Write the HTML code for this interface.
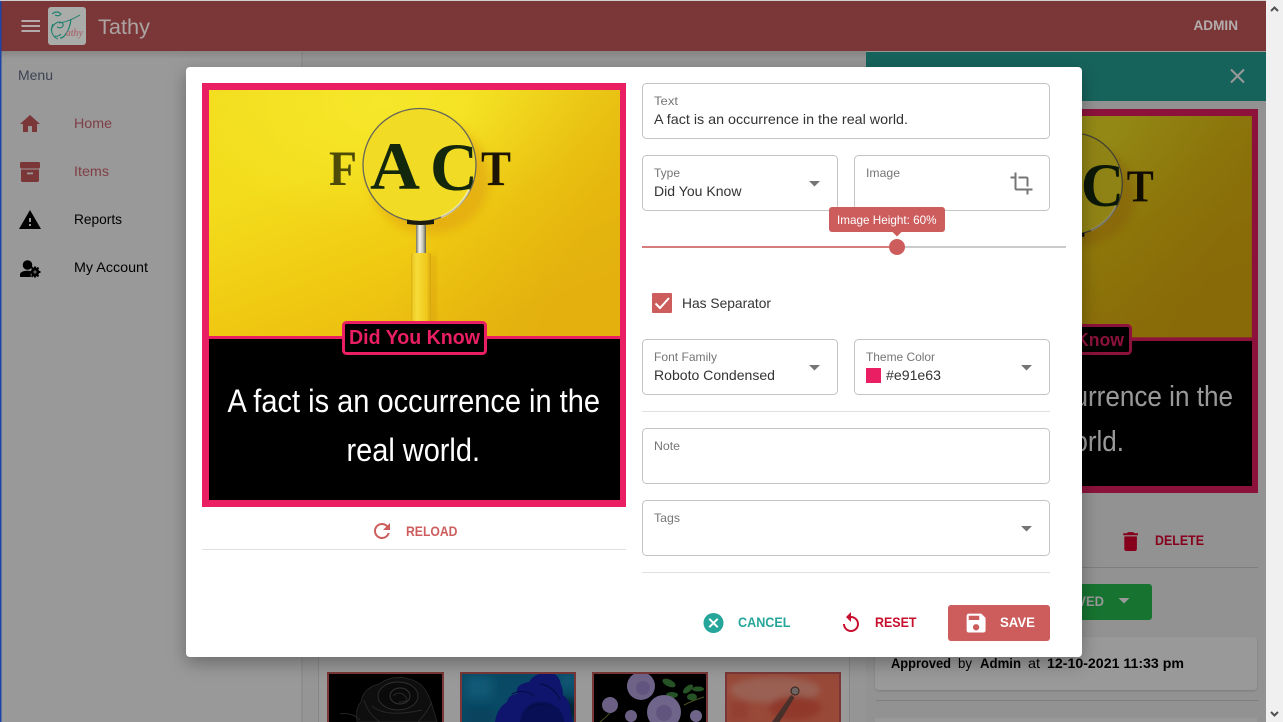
<!DOCTYPE html>
<html lang="en">
<head>
<meta charset="utf-8">
<title>Tathy</title>
<style>
html,body{margin:0;padding:0;width:1283px;height:722px;overflow:hidden;background:#fff}
svg{display:block}
text{font-family:"Liberation Sans",Arial,sans-serif;font-size:14px}
.m{font-weight:600}
.b{font-weight:700}
.lab{font-size:12px;fill:#757575}
.val{font-size:14px;fill:#333}
.f{fill:#fff;stroke:#c4c4c4;stroke-width:1}
.serif{font-family:"Liberation Serif",serif;font-weight:700}
</style>
</head>
<body>
<svg xmlns="http://www.w3.org/2000/svg" width="1283" height="722" viewBox="0 0 1283 722">
<defs>
  <linearGradient id="yel" x1="0" y1="0" x2="0.6" y2="1">
    <stop offset="0" stop-color="#f2dd1e"/>
    <stop offset=".35" stop-color="#f3dc1c"/>
    <stop offset=".7" stop-color="#f0ca12"/>
    <stop offset="1" stop-color="#eabb10"/>
  </linearGradient>
  <radialGradient id="glow" cx=".42" cy=".05" r=".5">
    <stop offset="0" stop-color="#f7ea2e" stop-opacity=".8"/>
    <stop offset="1" stop-color="#f7ea2e" stop-opacity="0"/>
  </radialGradient>
  <linearGradient id="rdark" x1="0" y1="0" x2="1" y2=".25">
    <stop offset=".6" stop-color="#dca60c" stop-opacity="0"/>
    <stop offset="1" stop-color="#dca60c" stop-opacity=".5"/>
  </linearGradient>
  <linearGradient id="metal" x1="0" y1="0" x2="1" y2="0">
    <stop offset="0" stop-color="#77745e"/><stop offset=".35" stop-color="#f6f6ee"/><stop offset=".7" stop-color="#c4c4b4"/><stop offset="1" stop-color="#5f5c48"/>
  </linearGradient>
  <linearGradient id="hand" x1="0" y1="0" x2="1" y2="0">
    <stop offset="0" stop-color="#d9ad12"/><stop offset=".12" stop-color="#f0cf28"/><stop offset=".3" stop-color="#f6dc3a"/><stop offset=".8" stop-color="#efc81a"/><stop offset="1" stop-color="#d6a40e"/>
  </linearGradient>
  <clipPath id="lensclip"><circle cx="419.500" cy="165" r="56"/></clipPath>
  <clipPath id="imgclip"><rect x="209" y="90" width="411" height="246"/></clipPath>
  <clipPath id="th"><rect x="327" y="672" width="117" height="50"/><rect x="460" y="672" width="116" height="50"/><rect x="592" y="672" width="116" height="50"/><rect x="725" y="672" width="116" height="50"/></clipPath>
  <filter id="ms" x="-10%" y="-10%" width="120%" height="120%"><feDropShadow dx="0" dy="6" stdDeviation="9" flood-color="#000" flood-opacity=".3"/></filter>
  <filter id="cs" x="-5%" y="-20%" width="110%" height="140%"><feDropShadow dx="0" dy="1" stdDeviation="1" flood-color="#000" flood-opacity=".16"/></filter>
  <filter id="bl" x="-30%" y="-30%" width="160%" height="160%"><feGaussianBlur stdDeviation="5"/></filter>
  <filter id="bm" x="-30%" y="-30%" width="160%" height="160%"><feGaussianBlur stdDeviation="3"/></filter>
  <linearGradient id="barsh" x1="0" y1="0" x2="0" y2="1"><stop offset="0" stop-color="#000" stop-opacity=".12"/><stop offset="1" stop-color="#000" stop-opacity="0"/></linearGradient>
</defs>

<!-- page base -->
<rect width="1283" height="722" fill="#fff"/>

<!-- sidebar -->
<rect x="301.500" y="52" width="1" height="670" fill="#dcdcdc"/>
<text x="18" y="80" textLength="35" lengthAdjust="spacingAndGlyphs" fill="#667088">Menu</text>
<path transform="translate(18,112)" d="M10 20v-6h4v6h5v-8h3L12 3 2 12h3v8z" fill="#cd5c5c"/>
<text x="74" y="128" textLength="38" lengthAdjust="spacingAndGlyphs" fill="#d56a72">Home</text>
<g fill="#cd5c5c">
  <rect x="20" y="162" width="20" height="6.5" rx="1.5"/>
  <path d="M21 169.500h18v11a1.500 1.500 0 0 1-1.500 1.500h-15a1.500 1.500 0 0 1-1.500-1.500z"/>
</g>
<rect x="27" y="172.500" width="6" height="1.800" fill="#fff"/>
<text x="74" y="176" textLength="35" lengthAdjust="spacingAndGlyphs" fill="#d56a72">Items</text>
<path transform="translate(18,208)" fill-rule="evenodd" d="M1 21h22L12 2 1 21zm12-3h-2v-2h2v2zm0-4h-2v-4h2v4z" fill="#000"/>
<text x="74" y="224" textLength="48" lengthAdjust="spacingAndGlyphs" fill="#000">Reports</text>
<g fill="#000">
  <circle cx="27.500" cy="265" r="4.800"/>
  <path d="M20 277v-2.500c0-2.500 3.500-3.800 7.500-3.800 1.200 0 2.300.1 3.300.4v5.900z"/>
  <circle cx="35" cy="272" r="4.300"/>
  <path d="M34 266.500h2l.4 1.800h-2.800zM34 277.500h2l.4-1.800h-2.800zM29.500 271h1.800v2h-1.800zM38.700 271h1.800v2h-1.800zM30.800 268l1.400-1.400 1.300 1.300-1.400 1.400zM36.500 275.800l1.400-1.400 1.300 1.300-1.400 1.400zM30.800 276l1.400 1.400 1.300-1.300-1.400-1.400zM36.500 268.200l1.400 1.400 1.300-1.300-1.400-1.400z"/>
</g>
<circle cx="35" cy="272" r="1.600" fill="#999"/>
<text x="74" y="272" textLength="74" lengthAdjust="spacingAndGlyphs" fill="#000">My Account</text>

<!-- main list area -->
<rect x="303" y="52" width="563" height="670" fill="#f8f8f8"/>
<rect x="318.500" y="80" width="531" height="642" fill="#fff"/>
<rect x="318" y="80" width="1" height="642" fill="#e0e0e0"/>
<rect x="849" y="80" width="1" height="642" fill="#e0e0e0"/>
<g>
  <rect x="327" y="672" width="117" height="50" fill="#000"/>
  <rect x="460" y="672" width="116" height="50" fill="#0f7ba8"/>
  <rect x="592" y="672" width="116" height="50" fill="#000"/>
  <rect x="725" y="672" width="116" height="50" fill="#ff7a5e"/>
  <g clip-path="url(#th)">
    <!-- black rose -->
    <path d="M357 722q-2-14 4-20 2-14 18-18 14-10 30-5 14 3 20 18 4 10 8 25z" fill="#181818" stroke="#444" stroke-width=".8"/>
    <ellipse cx="398" cy="696" rx="20" ry="14" fill="#111" stroke="#505050" stroke-width=".9"/>
    <ellipse cx="400" cy="696" rx="10" ry="8" fill="none" stroke="#5a5a5a" stroke-width=".9"/>
    <path d="M393 696q6-6 12 0t-6 6M372 706q14 12 50 4M364 700q4 14 16 22M432 702q-6 12-14 20M340 714q12-2 20 6" stroke="#444" stroke-width=".9" fill="none"/>
    <!-- blue rose -->
    <g filter="url(#bl)"><rect x="466" y="676" width="26" height="22" fill="#1f96c8"/><rect x="560" y="672" width="16" height="16" fill="#1e92c4"/><rect x="562" y="700" width="14" height="22" fill="#06263f"/><rect x="466" y="710" width="30" height="12" fill="#0d6c98"/></g>
    <path d="M495 722q2-14 12-20 2-8 10-8-2-10 12-12 6-10 22-9 8 1 10 12 2 4 2 10 8 6 8 20l2 7z" fill="#1a24b4"/>
    <path d="M520 722q2-16 16-20 14-2 24 8 4 6 4 12z" fill="#101a8c"/>
    <path d="M512 694q12-6 22 2M540 684q14 2 20 16M528 710q10-10 22-2" stroke="#0c1478" fill="none" stroke-width="1.200"/>
    <!-- purple roses -->
    <g fill="#3f8a3e">
      <ellipse cx="669" cy="683" rx="7" ry="3.500" transform="rotate(25 669 683)"/><ellipse cx="688" cy="689" rx="6" ry="3" transform="rotate(-40 688 689)"/><ellipse cx="698" cy="689" rx="6" ry="2.500"/><ellipse cx="692" cy="697" rx="5" ry="3.500"/><ellipse cx="672" cy="695" rx="6" ry="3"/>
    </g>
    <path d="M684 705q10-5 20-8M600 722q10-8 16-16" stroke="#7a8a3a" fill="none"/>
    <circle cx="641" cy="686" r="14" fill="#b7a5e2"/><circle cx="643" cy="688" r="7" fill="#a28ed4"/>
    <circle cx="610" cy="705" r="8" fill="#b2a0dc"/>
    <circle cx="664" cy="712" r="17" fill="#baa8e6"/><circle cx="664" cy="713" r="8" fill="#a28ed4"/>
    <circle cx="631" cy="719" r="3" fill="#b2a0dc"/><circle cx="631" cy="716" r="6" fill="#b2a0dc"/><circle cx="696" cy="716" r="6" fill="#baa8e6"/>
    <!-- coral rose -->
    <g filter="url(#bm)">
      <ellipse cx="775" cy="690" rx="45" ry="13" fill="#ffa08a"/>
      <ellipse cx="795" cy="708" rx="26" ry="12" fill="#f06048"/>
      <rect x="730" y="702" width="18" height="18" fill="#f46a54"/>
    </g>
    <path d="M772 722l19-27 3.500 2.500-15 24.500z" fill="#7a5048"/>
    <circle cx="795" cy="691" r="4" fill="#b8a8a4" stroke="#54342e"/>
  </g>
  <g fill="none" stroke="#cd5c5c" stroke-width="2">
    <path d="M328 722v-49h115v49"/>
    <path d="M461 722v-49h114v49"/>
    <path d="M593 722v-49h114v49"/>
    <path d="M726 722v-49h114v49"/>
  </g>
</g>

<!-- right detail panel -->
<rect x="866" y="52" width="400" height="670" fill="#f4f4f4"/>
<rect x="866" y="52" width="400" height="49" fill="#26a69a"/>
<path d="M1231 69.500l13 13M1244 69.500l-13 13" stroke="#fff" stroke-width="2"/>
<rect x="876" y="109" width="382" height="384" fill="#e91e63"/>
<rect x="882" y="341" width="370" height="145" fill="#000"/>

<g transform="translate(693.900,35) scale(.9)">
  <g clip-path="url(#imgclip)">
    <rect x="209" y="90" width="411" height="246" fill="url(#yel)"/>
    <rect x="209" y="90" width="411" height="246" fill="url(#glow)"/>
    <rect x="209" y="90" width="411" height="246" fill="url(#rdark)"/>
    <ellipse cx="430" cy="178" rx="60" ry="56" fill="#d88c08" opacity=".4" filter="url(#bl)"/>
    <text class="serif" x="329" y="185" style="font-size:50px" textLength="28" lengthAdjust="spacingAndGlyphs" fill="#4e4a08">F</text>
    <text class="serif" x="481" y="185" style="font-size:50px" textLength="30" lengthAdjust="spacingAndGlyphs" fill="#1c1404">T</text>
    <circle cx="419.500" cy="165" r="56.500" fill="#f1db24" stroke="#66665a" stroke-width="1.300"/>
    <g clip-path="url(#lensclip)">
      <text class="serif" x="370" y="189" style="font-size:68px" textLength="50" lengthAdjust="spacingAndGlyphs" fill="#13270c">A</text>
      <text class="serif" x="430" y="190" style="font-size:68px" textLength="48" lengthAdjust="spacingAndGlyphs" fill="#13270c">C</text>
    </g>
    <path d="M469 190a55 55 0 0 1-28 27" fill="none" stroke="#fff" stroke-width="2.500" opacity=".55"/>
    <path d="M407 219.500q13 3 27 0v4.500q-13 2-27 0z" fill="#1b1b10"/>
    <rect x="416" y="225" width="10" height="28" fill="url(#metal)"/>
    <rect x="411" y="253" width="20" height="83" rx="2" fill="url(#hand)"/>
  </g>
</g>
<rect x="1002.500" y="325.500" width="128" height="28" rx="3" fill="#000" stroke="#e91e63" stroke-width="3"/>
<text class="b" x="1006" y="346" style="font-size:18px" textLength="118" lengthAdjust="spacingAndGlyphs" fill="#e91e63">Did You Know</text>
<text x="898" y="406" style="font-size:29px" textLength="335" lengthAdjust="spacingAndGlyphs" fill="#fff">A fact is an occurrence in the</text>
<text x="1004" y="451" style="font-size:29px" textLength="120" lengthAdjust="spacingAndGlyphs" fill="#fff">real world.</text>

<path transform="translate(1118,529) scale(1.050)" d="M6 19c0 1.100.9 2 2 2h8c1.100 0 2-.9 2-2V7H6v12zM19 4h-3.500l-1-1h-5l-1 1H5v2h14V4z" fill="#e00030"/>
<text class="m" x="1155" y="545" textLength="49" lengthAdjust="spacingAndGlyphs" fill="#e00030">DELETE</text>
<rect x="876" y="567" width="382" height="1" fill="#d2d2d2"/>
<rect x="1000" y="584" width="152" height="36" rx="3" fill="#26c050"/>
<text class="m" x="1058" y="606" textLength="46" lengthAdjust="spacingAndGlyphs" fill="#fff">ROVED</text>
<path d="M1118.500 598h11l-5.500 5.500z" fill="#fff"/>
<rect x="875" y="637" width="382" height="53" rx="4" fill="#fff" filter="url(#cs)"/>
<text class="b" x="891" y="668" textLength="60" lengthAdjust="spacingAndGlyphs" fill="#000">Approved</text>
<text x="958" y="668" textLength="14" lengthAdjust="spacingAndGlyphs" fill="#000">by</text>
<text class="b" x="980" y="668" textLength="41" lengthAdjust="spacingAndGlyphs" fill="#000">Admin</text>
<text x="1028" y="668" textLength="12" lengthAdjust="spacingAndGlyphs" fill="#000">at</text>
<text class="b" x="1047" y="668" textLength="137" lengthAdjust="spacingAndGlyphs" fill="#000">12-10-2021 11:33 pm</text>
<rect x="876" y="700" width="382" height="1" fill="#d2d2d2"/>
<rect x="875" y="718" width="382" height="4" fill="#fff"/>

<!-- app bar -->
<rect x="0" y="51" width="866" height="8" fill="url(#barsh)"/>
<rect x="0" y="1" width="1283" height="50" fill="#cd5c5c"/>

<!-- scrim -->
<rect x="0" y="0" width="1266" height="722" fill="#000" opacity=".4"/>

<!-- window chrome -->
<rect x="0" y="0" width="1.500" height="722" fill="#1c43a6"/>
<rect x="0" y="0" width="1266" height="1" fill="#cfcfcf"/>
<rect x="1266" y="0" width="17" height="722" fill="#f0f0f0"/>
<path d="M1271 11l3.500-3.500 3.500 3.500" fill="none" stroke="#505050" stroke-width="2"/>
<path d="M1271 712l3.500 3.500 3.500-3.500" fill="none" stroke="#505050" stroke-width="2"/>

<!-- app bar content -->
<g fill="#b5abab">
  <rect x="21.500" y="20" width="18.500" height="2"/>
  <rect x="21.500" y="25" width="18.500" height="2"/>
  <rect x="21.500" y="30" width="18.500" height="2"/>
</g>
<rect x="48" y="7" width="38" height="38" rx="3" fill="#a9aca8"/>
<g fill="none" stroke="#1f7f6e">
  <path d="M52 14q5-4 9 0-2 3-6 1M53 24q-3 6 0 11 2 3 5 4M51 30q3-8 9-8 4 1 3 4-2 3-6 1M55 36q3 1 6-2" stroke-width="1.100"/>
  <path d="M59 23q9-1 21-8" stroke-width="1"/>
  <path d="M71 19q-1 10-6 16-2 3-5 3" stroke-width="1.200"/>
</g>
<text x="66" y="36" style="font-size:11px;font-family:'Liberation Serif',serif;font-style:italic;font-weight:700" textLength="17" lengthAdjust="spacingAndGlyphs" fill="#a87078">athy</text>
<text x="98" y="34" style="font-size:21px" textLength="52" lengthAdjust="spacingAndGlyphs" fill="#aca4a4">Tathy</text>
<text class="m" x="1193.500" y="30" textLength="44.500" lengthAdjust="spacingAndGlyphs" fill="#b5adad">ADMIN</text>

<!-- modal -->
<rect x="186" y="67" width="896" height="590" rx="4" fill="#fff" filter="url(#ms)"/>

<!-- preview card -->
<rect x="202" y="83" width="424" height="424" fill="#e91e63"/>
<rect x="209" y="339" width="411" height="161" fill="#000"/>
<g clip-path="url(#imgclip)">
  <rect x="209" y="90" width="411" height="246" fill="url(#yel)"/>
  <rect x="209" y="90" width="411" height="246" fill="url(#glow)"/>
  <rect x="209" y="90" width="411" height="246" fill="url(#rdark)"/>
  <ellipse cx="430" cy="178" rx="60" ry="56" fill="#d88c08" opacity=".4" filter="url(#bl)"/>
  <rect x="430" y="255" width="6" height="80" fill="#cc8a08" opacity=".35" filter="url(#bm)"/>
  <text class="serif" x="329" y="185" style="font-size:50px" textLength="28" lengthAdjust="spacingAndGlyphs" fill="#4e4a08">F</text>
  <text class="serif" x="481" y="185" style="font-size:50px" textLength="30" lengthAdjust="spacingAndGlyphs" fill="#1c1404">T</text>
  <circle cx="419.500" cy="165" r="56.500" fill="#f1db24" stroke="#66665a" stroke-width="1.300"/>
  <g clip-path="url(#lensclip)">
    <text class="serif" x="370" y="189" style="font-size:68px" textLength="50" lengthAdjust="spacingAndGlyphs" fill="#13270c">A</text>
    <text class="serif" x="430" y="190" style="font-size:68px" textLength="48" lengthAdjust="spacingAndGlyphs" fill="#13270c">C</text>
  </g>
  <path d="M469 190a55 55 0 0 1-28 27" fill="none" stroke="#fff" stroke-width="2.500" opacity=".55"/>
  <path d="M407 219.500q13 3 27 0v4.500q-13 2-27 0z" fill="#1b1b10"/>
  <rect x="416" y="225" width="10" height="28" fill="url(#metal)"/>
  <rect x="411" y="253" width="20" height="83" rx="2" fill="url(#hand)"/>
</g>
<rect x="343.500" y="322.500" width="142" height="31" rx="3" fill="#000" stroke="#e91e63" stroke-width="3"/>
<text class="b" x="349" y="344" style="font-size:20px" textLength="131" lengthAdjust="spacingAndGlyphs" fill="#e91e63">Did You Know</text>
<text x="227.500" y="412" style="font-size:32px" textLength="372.500" lengthAdjust="spacingAndGlyphs" fill="#fff">A fact is an occurrence in the</text>
<text x="346.500" y="461" style="font-size:32px" textLength="133.500" lengthAdjust="spacingAndGlyphs" fill="#fff">real world.</text>

<path transform="translate(370,519)" d="M17.650 6.350C16.200 4.900 14.210 4 12 4c-4.420 0-7.990 3.580-7.990 8s3.570 8 7.990 8c3.730 0 6.840-2.550 7.730-6h-2.080c-.82 2.330-3.040 4-5.650 4-3.310 0-6-2.690-6-6s2.690-6 6-6c1.660 0 3.140.69 4.220 1.780L13 11h7V4l-2.350 2.350z" fill="#cd5c5c"/>
<text class="m" x="406" y="536" textLength="51.500" lengthAdjust="spacingAndGlyphs" fill="#cd5c5c">RELOAD</text>
<rect x="202" y="549" width="424" height="1" fill="#e0e0e0"/>

<!-- form -->
<rect class="f" x="642.500" y="83.500" width="407" height="55" rx="4"/>
<text class="lab" x="654" y="105" textLength="24" lengthAdjust="spacingAndGlyphs">Text</text>
<text class="val" x="654" y="124" textLength="254" lengthAdjust="spacingAndGlyphs">A fact is an occurrence in the real world.</text>

<rect class="f" x="642.500" y="155.500" width="195" height="55" rx="4"/>
<text class="lab" x="654" y="177" textLength="26" lengthAdjust="spacingAndGlyphs">Type</text>
<text class="val" x="654" y="196" textLength="87.500" lengthAdjust="spacingAndGlyphs">Did You Know</text>
<path d="M809 181h11l-5.500 5.500z" fill="#757575"/>

<rect class="f" x="854.500" y="155.500" width="195" height="55" rx="4"/>
<text class="lab" x="866" y="177" textLength="34" lengthAdjust="spacingAndGlyphs">Image</text>
<path transform="translate(1009.500,171.500)" d="M17 15h2V7c0-1.100-.9-2-2-2H9v2h8v8zM7 17V1H5v4H1v2h4v10c0 1.100.9 2 2 2h10v4h2v-4h4v-2H7z" fill="#757575"/>

<rect x="642" y="246.200" width="255" height="1.600" fill="#cd5c5c"/>
<rect x="897" y="246.200" width="169" height="1.600" fill="#bdbdbd"/>
<circle cx="897" cy="247" r="8" fill="#cd5c5c"/>
<rect x="829" y="207" width="116" height="25" rx="3" fill="#cd5c5c"/>
<path d="M892.500 232h9l-4.500 4.500z" fill="#cd5c5c"/>
<text x="837" y="224" style="font-size:12px" textLength="99.500" lengthAdjust="spacingAndGlyphs" fill="#fff">Image Height: 60%</text>

<rect x="652" y="293" width="20" height="20" rx="1" fill="#cd5c5c"/>
<path d="M655.500 303.500l4.500 4.500 9-10" fill="none" stroke="#fff" stroke-width="2"/>
<text class="val" x="682" y="308" textLength="89" lengthAdjust="spacingAndGlyphs">Has Separator</text>

<rect class="f" x="642.500" y="339.500" width="195" height="55" rx="4"/>
<text class="lab" x="654" y="361" textLength="63" lengthAdjust="spacingAndGlyphs">Font Family</text>
<text class="val" x="654" y="380" textLength="121" lengthAdjust="spacingAndGlyphs">Roboto Condensed</text>
<path d="M809 365h11l-5.500 5.500z" fill="#757575"/>

<rect class="f" x="854.500" y="339.500" width="195" height="55" rx="4"/>
<text class="lab" x="866" y="361" textLength="69" lengthAdjust="spacingAndGlyphs">Theme Color</text>
<rect x="866" y="368" width="15" height="15" fill="#e91e63"/>
<text class="val" x="886" y="380" textLength="55" lengthAdjust="spacingAndGlyphs">#e91e63</text>
<path d="M1021 365h11l-5.500 5.500z" fill="#757575"/>

<rect x="642" y="411" width="408" height="1" fill="#e0e0e0"/>

<rect class="f" x="642.500" y="428.500" width="407" height="55" rx="4"/>
<text class="lab" x="654" y="450" textLength="26" lengthAdjust="spacingAndGlyphs">Note</text>

<rect class="f" x="642.500" y="500.500" width="407" height="55" rx="4"/>
<text class="lab" x="654" y="522" textLength="26" lengthAdjust="spacingAndGlyphs">Tags</text>
<path d="M1021 526h11l-5.500 5.500z" fill="#757575"/>

<rect x="642" y="572" width="408" height="1" fill="#e0e0e0"/>

<!-- actions -->
<circle cx="713.500" cy="623" r="10" fill="#26a69a"/>
<path d="M709.300 618.800l8.400 8.400M717.700 618.800l-8.400 8.400" stroke="#fff" stroke-width="2"/>
<text class="m" x="738" y="627" textLength="52.500" lengthAdjust="spacingAndGlyphs" fill="#26a69a">CANCEL</text>
<path transform="translate(839,611)" d="M12 5V1L7 6l5 5V7c3.310 0 6 2.690 6 6s-2.690 6-6 6-6-2.690-6-6H4c0 4.420 3.580 8 8 8s8-3.580 8-8-3.580-8-8-8z" fill="#c8102e"/>
<text class="m" x="875" y="627" textLength="41.500" lengthAdjust="spacingAndGlyphs" fill="#c8102e">RESET</text>
<rect x="948" y="605" width="102" height="36" rx="3" fill="#cd5c5c"/>
<path transform="translate(963.500,610.500) scale(1.050)" d="M17 3H5c-1.110 0-2 .9-2 2v14c0 1.100.89 2 2 2h14c1.100 0 2-.9 2-2V7l-4-4zm-5 16c-1.660 0-3-1.340-3-3s1.340-3 3-3 3 1.340 3 3-1.340 3-3 3zm3-10H5V5h10v4z" fill="#fff"/>
<text class="m" x="1000" y="627" textLength="35" lengthAdjust="spacingAndGlyphs" fill="#fff">SAVE</text>
</svg>
</body>
</html>
